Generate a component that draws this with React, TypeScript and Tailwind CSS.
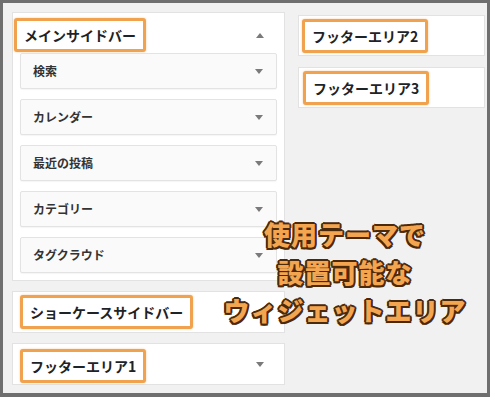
import React from 'react';

const jp = "font-['Noto_Sans_CJK_JP','Noto_Sans',sans-serif]";

function Caret({ up = false }: { up?: boolean }) {
  return (
    <svg width="8" height="5" viewBox="0 0 8 5" className="shrink-0">
      {up ? <polygon points="4,0 8,5 0,5" fill="#7a7a7a" /> : <polygon points="0,0 8,0 4,5" fill="#7a7a7a" />}
    </svg>
  );
}

function Label({ children }: { children: React.ReactNode }) {
  return (
    <div className="border-[3px] border-[#f0a24e] rounded-[3px] bg-white px-[7px] h-[34px] flex items-center text-[14px] font-bold text-[#1d2327] leading-none shadow-[0_0_2px_rgba(240,162,78,0.6)]">
      {children}
    </div>
  );
}

const widgets = ['検索', 'カレンダー', '最近の投稿', 'カテゴリー', 'タグクラウド'];

export default function App() {
  return (
    <div className={`${jp} relative w-[490px] h-[397px] overflow-hidden bg-[#f1f1f1] border-t-[3px] border-l-[3px] border-r-[3px] border-b-[4px] border-[#6f6f6f] flex gap-[13px] pl-[9px] pt-[9px]`}>
      {/* left column */}
      <div className="w-[273px] flex flex-col gap-[10px]">
        <div className="bg-white border border-[#e2e2e2] pb-[7px]">
          <div className="flex items-center justify-between pl-[1px] pr-[20px] pt-[5px] pb-[1px]">
            <Label>メインサイドバー</Label>
            <Caret up />
          </div>
          <div className="flex flex-col gap-[10px] px-[7px]">
            {widgets.map((w) => (
              <div key={w} className="h-[36px] bg-[#fafafa] border border-[#e3e3e3] rounded-[2px] shadow-[0_1px_1px_rgba(0,0,0,0.04)] flex items-center justify-between pl-[12px] pr-[13px]">
                <span className="text-[12px] font-semibold text-[#333333]">{w}</span>
                <Caret />
              </div>
            ))}
          </div>
        </div>
        <div className="bg-white border border-[#e2e2e2] h-[42px] flex items-center pl-[7px]">
          <Label>ショーケースサイドバー</Label>
        </div>
        <div className="bg-white border border-[#e2e2e2] h-[42px] flex items-end justify-between pl-[7px] pr-[20px] pb-[1px]">
          <Label>フッターエリア1</Label>
          <div className="self-center pt-[2px]"><Caret /></div>
        </div>
      </div>

      {/* right column */}
      <div className="flex-1 flex flex-col gap-[11px] pt-[3px] pr-[2px]">
        <div className="bg-white border border-[#e2e2e2] h-[41px] flex items-center pl-[3px]">
          <Label>フッターエリア2</Label>
        </div>
        <div className="bg-white border border-[#e2e2e2] h-[41px] flex items-center pl-[4px]">
          <Label>フッターエリア3</Label>
        </div>
      </div>

      {/* overlay caption */}
      <div className="absolute left-[217px] top-[212px] w-[250px] text-center text-[26px] tracking-[1px] leading-[38px] font-black text-[#f3a550] [text-shadow:2px_0_0_#4b2a0c,-2px_0_0_#4b2a0c,0_2px_0_#4b2a0c,0_-2px_0_#4b2a0c,1.5px_1.5px_0_#4b2a0c,-1.5px_1.5px_0_#4b2a0c,1.5px_-1.5px_0_#4b2a0c,-1.5px_-1.5px_0_#4b2a0c,0_0_4px_#ffffff]">
        <div>使用テーマで</div>
        <div>設置可能な</div>
        <div>ウィジェットエリア</div>
      </div>
    </div>
  );
}
